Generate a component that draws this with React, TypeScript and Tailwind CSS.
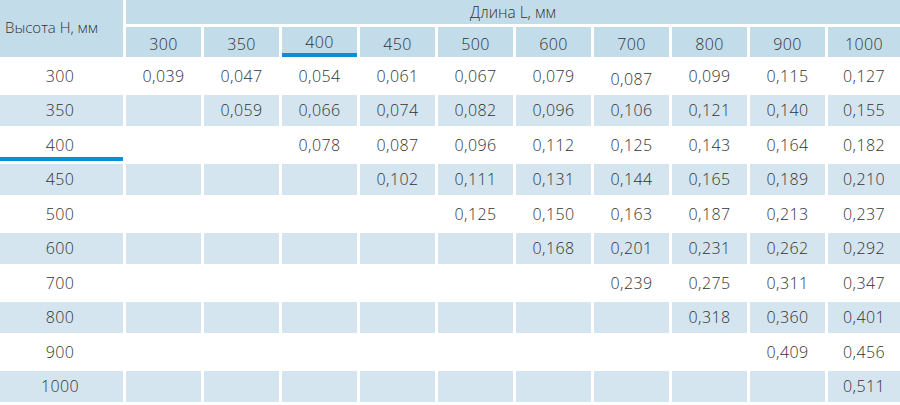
import React from 'react';

const cols = ['300', '350', '400', '450', '500', '600', '700', '800', '900', '1000'];

const rows: { h: string; v: (string | null)[] }[] = [
  { h: '300', v: ['0,039', '0,047', '0,054', '0,061', '0,067', '0,079', '0,087', '0,099', '0,115', '0,127'] },
  { h: '350', v: [null, '0,059', '0,066', '0,074', '0,082', '0,096', '0,106', '0,121', '0,140', '0,155'] },
  { h: '400', v: [null, null, '0,078', '0,087', '0,096', '0,112', '0,125', '0,143', '0,164', '0,182'] },
  { h: '450', v: [null, null, null, '0,102', '0,111', '0,131', '0,144', '0,165', '0,189', '0,210'] },
  { h: '500', v: [null, null, null, null, '0,125', '0,150', '0,163', '0,187', '0,213', '0,237'] },
  { h: '600', v: [null, null, null, null, null, '0,168', '0,201', '0,231', '0,262', '0,292'] },
  { h: '700', v: [null, null, null, null, null, null, '0,239', '0,275', '0,311', '0,347'] },
  { h: '800', v: [null, null, null, null, null, null, null, '0,318', '0,360', '0,401'] },
  { h: '900', v: [null, null, null, null, null, null, null, null, '0,409', '0,456'] },
  { h: '1000', v: [null, null, null, null, null, null, null, null, null, '0,511'] },
];

const App: React.FC = () => {
  return (
    <div
      className="w-[900px] h-[405px] bg-white overflow-hidden text-[16px] font-light tracking-[0.4px] text-[#333]"
      style={{ fontFamily: '"Open Sans", "Noto Sans", sans-serif' }}
    >
      <div className="grid grid-cols-[123px_repeat(9,75px)_1fr] grid-rows-[24px_30px_repeat(10,31.5px)] gap-[3px]">
        {/* header */}
        <div className="row-span-2 bg-[#c3dce9] flex items-center pl-[5px] pb-[2px] text-[15px] tracking-normal">
          Высота H, мм
        </div>
        <div className="col-span-10 bg-[#c3dce9] flex items-center justify-center pt-[2px] text-[15.5px] tracking-normal">
          Длина L, мм
        </div>
        {cols.map((c) => (
          <div
            key={c}
            className={`bg-[#c3dce9] flex items-center justify-center pt-[3px] ${
              c === '400' ? 'border-b-4 border-[#0a8edb]' : ''
            }`}
          >
            {c}
          </div>
        ))}

        {/* body */}
        {rows.map((r, i) => {
          const shaded = i % 2 === 1;
          const bg = shaded ? 'bg-[#d4e5ef]' : 'bg-white';
          return (
            <React.Fragment key={r.h}>
              <div
                className={`${bg} flex items-center justify-center pr-[3px] ${
                  r.h === '400' ? 'border-b-4 border-[#0a8edb] pt-[4px]' : ''
                }`}
              >
                {r.h}
              </div>
              {r.v.map((val, j) => (
                <div
                  key={j}
                  className={`${bg} flex items-center justify-center ${
                    r.h === '300' && j === 6 ? 'pt-[6px]' : ''
                  }`}
                >
                  {val}
                </div>
              ))}
            </React.Fragment>
          );
        })}
      </div>
    </div>
  );
};

export default App;
